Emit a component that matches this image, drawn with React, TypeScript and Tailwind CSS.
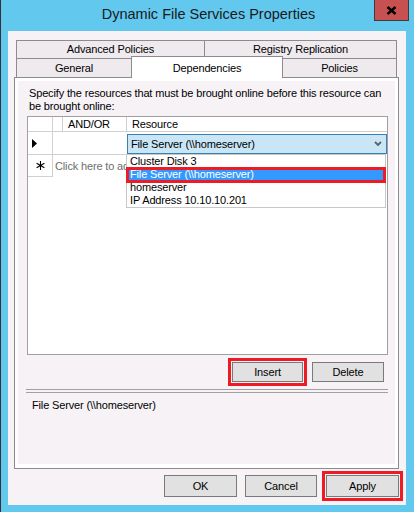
import React from "react";

const F = { fontFamily: '"Liberation Sans", Arial, sans-serif' };

function Btn({ label, w, h }: { label: string; w: string; h: string }) {
  return (
    <div
      className={`${w} ${h} bg-[#e1e1e1] border border-[#7a7a7a] flex items-center justify-center text-[11px] text-black`}
    >
      {label}
    </div>
  );
}

export default function App() {
  return (
    <div
      className="w-[414px] h-[512px] bg-[#62c8ee] border-l border-[#333333] flex flex-col overflow-hidden relative"
      style={F}
    >
      {/* Title bar */}
      <div className="h-[31px] flex items-center justify-center relative">
        <span className="text-[14.5px] text-[#1a1a1a] pb-[1px] pl-[2px]">
          Dynamic File Services Properties
        </span>
        <div className="absolute right-[5px] top-0 w-[35px] h-[21px] bg-[#c75050] border-l border-r border-b border-[#3c3c3c] flex items-center justify-center">
          <svg width="11" height="9" viewBox="0 0 11 9">
            <path d="M1.5 1 L9.5 8 M9.5 1 L1.5 8" stroke="#000" strokeWidth="2.4" />
          </svg>
        </div>
      </div>

      {/* Client */}
      <div className="ml-[7px] w-[398px] h-[474px] bg-[#f6f2f6] flex flex-col pt-[9px] pl-[6px] tracking-[-0.15px]">
        {/* Tabs */}
        <div className="w-[385px] flex flex-col text-[11px] text-black">
          <div className="flex ml-[2px] h-[18px]">
            <div className="w-[188px] h-full bg-[#eeeaee] border-l border-t border-[#8c8c8c] flex items-center justify-center">
              Advanced Policies
            </div>
            <div className="w-[193px] h-full bg-[#eeeaee] border-l border-t border-r border-[#8c8c8c] flex items-center justify-center">
              Registry Replication
            </div>
          </div>
          <div className="flex ml-[2px] h-[19px] items-end relative z-10">
            <div className="w-[115px] h-[19px] bg-[#eeeaee] border-l border-t border-[#8c8c8c] flex items-center justify-center pt-[1px]">
              General
            </div>
            <div className="w-[152px] h-[22px] bg-white border-l border-t border-r border-[#8c8c8c] flex items-start justify-center pt-[3px] relative top-[1px]">
              Dependencies
            </div>
            <div className="w-[114px] h-[19px] bg-[#eeeaee] border-t border-r border-[#8c8c8c] flex items-center justify-center pt-[1px]">
              Policies
            </div>
          </div>
        </div>

        {/* Panel */}
        <div className="w-[385px] h-[392px] border border-[#8c8c8c] bg-white pt-[3px] px-[3px] pb-[4px] flex">
          <div className="flex-1 bg-[#f6f2f6] flex flex-col text-[11px] text-black">
            <div className="pl-[11px] pt-[6px] leading-[13px] whitespace-nowrap">
              Specify the resources that must be brought online before this resource can
              <br />
              be brought online:
            </div>

            {/* Grid */}
            <div className="ml-[9px] mt-[3px] w-[361px] h-[239px] border border-[#a0a0a0] bg-white relative">
              {/* header */}
              <div className="flex h-[15px] border-b border-[#d0d0d0] leading-[14px]">
                <div className="w-[25px] border-r border-[#d0d0d0]" />
                <div className="w-[10px] border-r border-[#d0d0d0]" />
                <div className="w-[64px] border-r border-[#d0d0d0] pl-[5px]">AND/OR</div>
                <div className="flex-1 pl-[5px]">Resource</div>
              </div>
              {/* row 1 */}
              <div className="flex h-[23px]">
                <div className="w-[25px] border-r border-b border-[#d0d0d0] flex items-center pl-[4px]">
                  <svg width="5" height="9" viewBox="0 0 5 9">
                    <path d="M0 0 L5 4.5 L0 9 Z" fill="#000" />
                  </svg>
                </div>
                <div className="w-[74px] border-b border-[#d0d0d0]" />
                <div className="flex-1 pt-[2px] pb-[1px]">
                  <div className="h-[20px] bg-[#c9e6f7] border border-[#3c7fb1] flex items-center justify-between pl-[3px] pr-[4px]">
                    <span>File Server (\\homeserver)</span>
                    <svg width="8" height="6" viewBox="0 0 8 6">
                      <path d="M1 1 L4 4 L7 1" stroke="#606060" strokeWidth="1.8" fill="none" />
                    </svg>
                  </div>
                </div>
              </div>
              {/* row 2 */}
              <div className="flex h-[22px]">
                <div className="w-[25px] border-r border-b border-[#d0d0d0] flex items-center justify-center">
                  <svg width="9" height="9" viewBox="0 0 9 9">
                    <path
                      d="M4.5 0 V9 M0.6 2.25 L8.4 6.75 M0.6 6.75 L8.4 2.25"
                      stroke="#000"
                      strokeWidth="1.1"
                    />
                  </svg>
                </div>
                <div className="w-[73px] flex items-center pl-[2px] text-[#6d6d6d] whitespace-nowrap overflow-hidden">
                  Click here to add a new row.
                </div>
              </div>

              {/* dropdown list */}
              <div className="absolute left-[98px] top-[37px] w-[260px] h-[54px] bg-white border border-[#c8c8c8] leading-[13px]">
                <div className="h-[13px] pl-[3px]">Cluster Disk 3</div>
                <div className="h-[13px] pl-[3px] bg-[#3399ff] text-white">File Server (\\homeserver)</div>
                <div className="h-[13px] pl-[3px]">homeserver</div>
                <div className="h-[13px] pl-[3px]">IP Address 10.10.10.201</div>
              </div>
              {/* red highlight */}
              <div className="absolute left-[98px] top-[50px] w-[260px] h-[16px] border-[3px] border-[#ed1c24]" />
            </div>

            {/* Insert / Delete */}
            <div className="flex justify-end items-center pr-[11px] mt-[3px] gap-[5px]">
              <div className="border-[3px] border-[#ed1c24] p-[1px]">
                <Btn label="Insert" w="w-[71px]" h="h-[20px]" />
              </div>
              <Btn label="Delete" w="w-[72px]" h="h-[20px]" />
            </div>

            {/* separator */}
            <div className="ml-[8px] mt-[3px] w-[362px] h-[4px] border-t border-b border-[#a0a0a0]" />

            <div className="ml-[14px] mt-[6px] leading-[13px]">File Server (\\homeserver)</div>
          </div>
        </div>

        {/* Bottom buttons */}
        <div className="flex justify-end items-center pr-[3px] mt-[2px]">
          <Btn label="OK" w="w-[73px]" h="h-[22px]" />
          <div className="ml-[8px]">
            <Btn label="Cancel" w="w-[72px]" h="h-[22px]" />
          </div>
          <div className="ml-[5px] border-[3px] border-[#ed1c24] p-[1px]">
            <Btn label="Apply" w="w-[73px]" h="h-[22px]" />
          </div>
        </div>
      </div>
    </div>
  );
}
